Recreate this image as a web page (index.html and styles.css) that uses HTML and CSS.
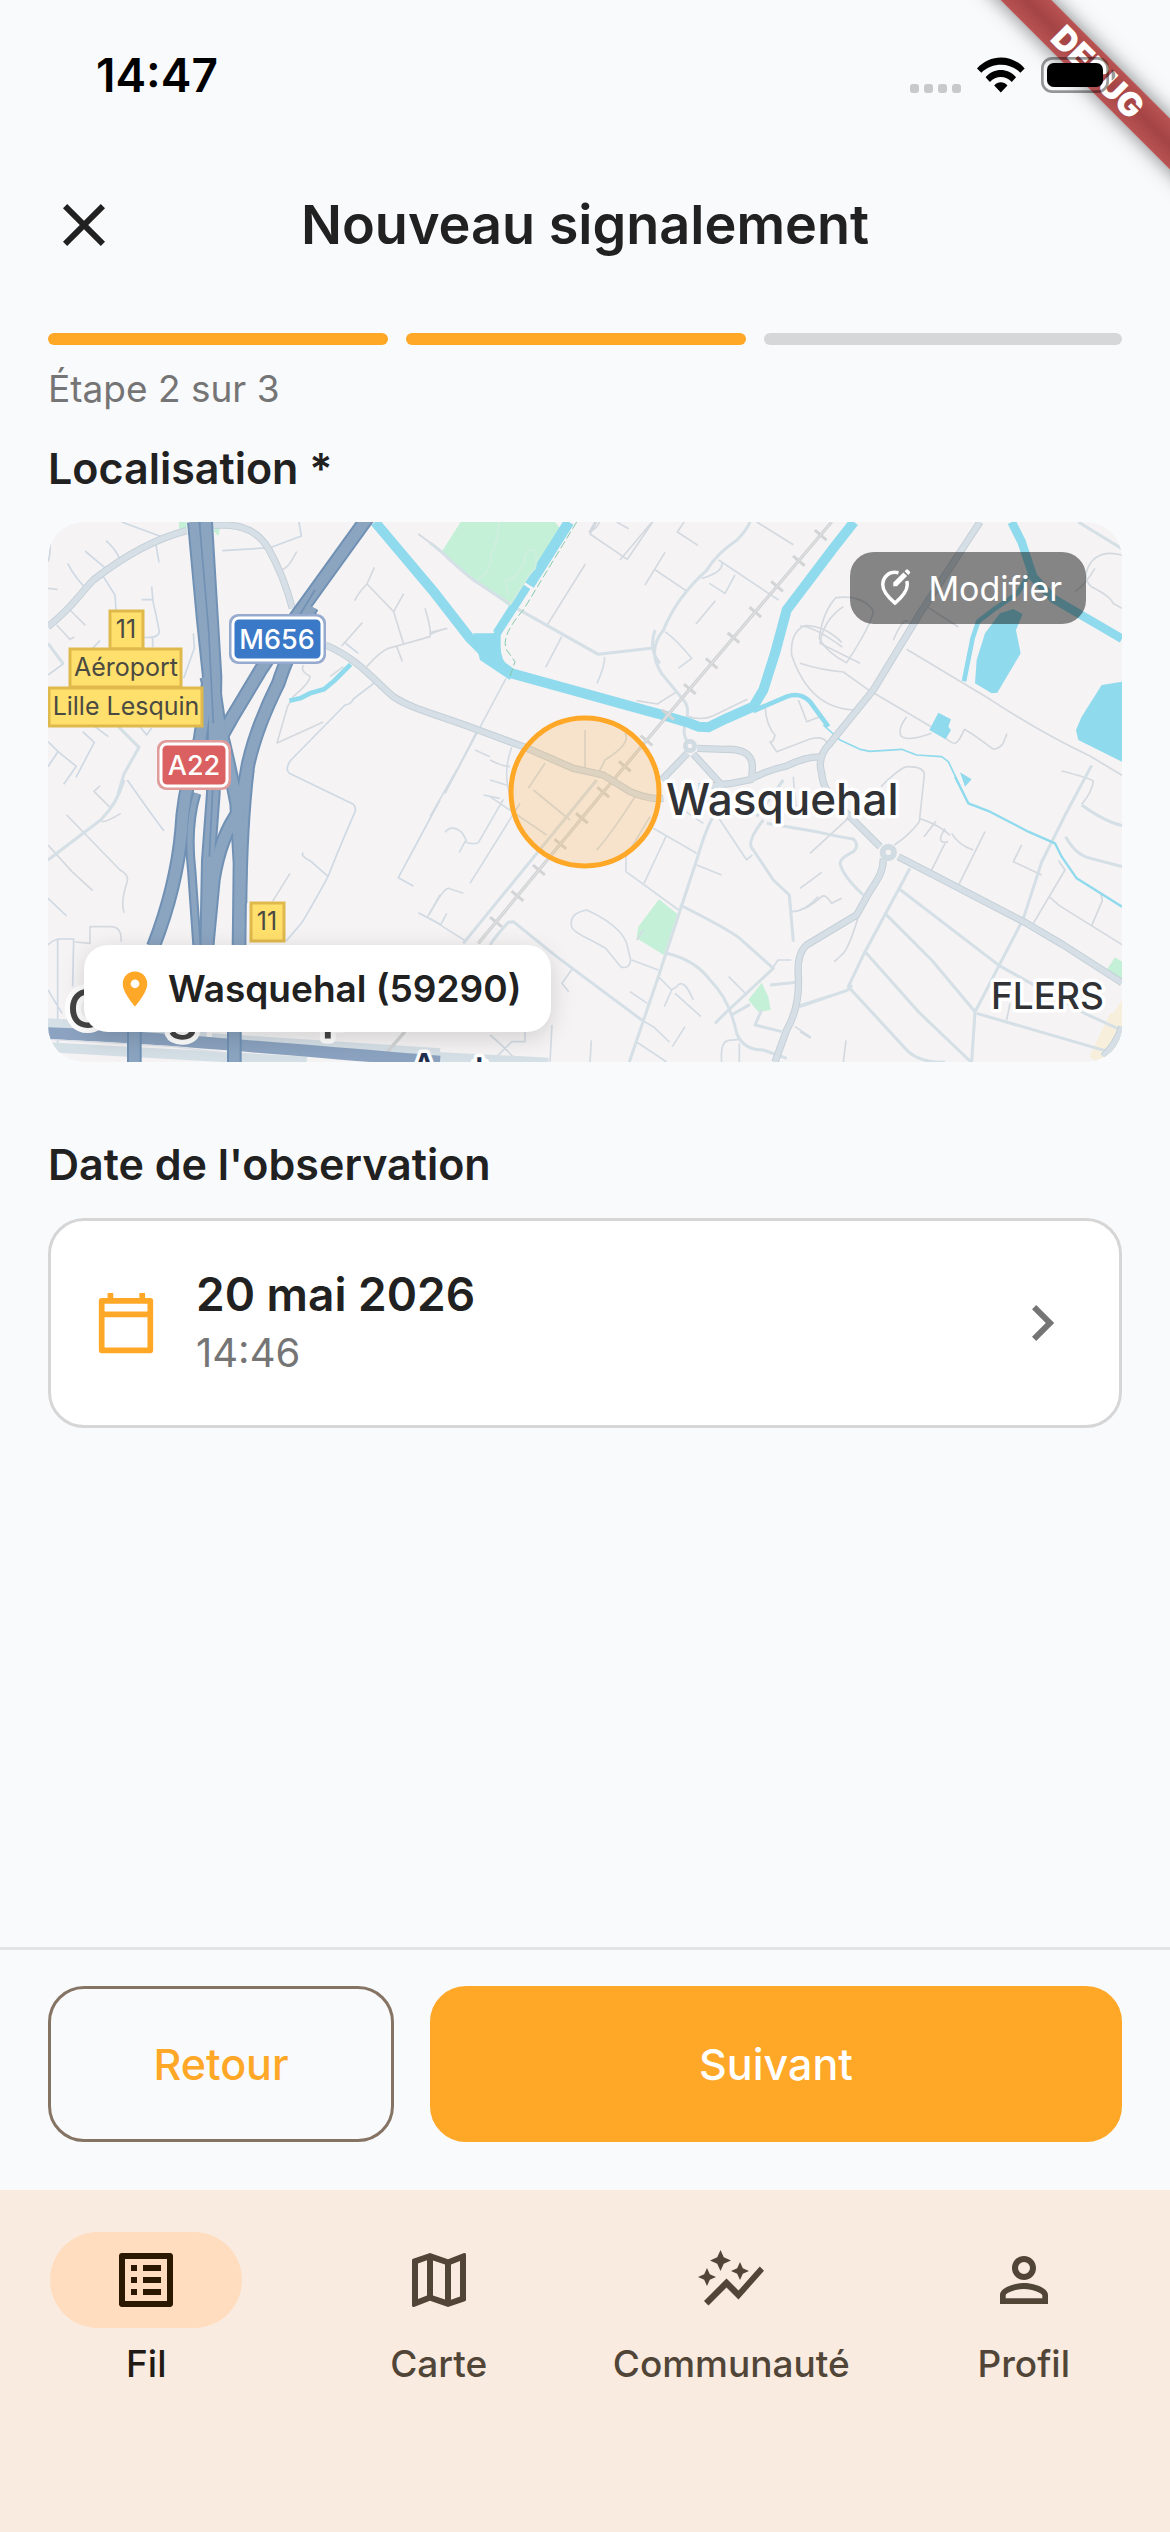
FILE: index.html
```html
<!DOCTYPE html>
<html lang="fr">
<head>
<meta charset="utf-8">
<meta name="viewport" content="width=device-width, initial-scale=1">
<title>Nouveau signalement</title>
<link rel="stylesheet" href="styles.css">
</head>
<body>
<div class="app">
  <div class="debug-banner" aria-hidden="true">DEBUG</div>

  <div class="status">
    <span class="status-time">14:47</span>
    <div class="status-icons">
      <div class="signal"><i></i><i></i><i></i><i></i></div>
      <svg width="48" height="36" viewBox="585 165 145 108" aria-hidden="true"><path d="M585 199C625 155 690 155 729 199L716 212C683 180 632 180 598 212ZM611 226C636 197 678 197 703 226L690 240C672 220 642 220 624 240ZM637 251C648 238 666 238 677 251L657 272Z"/></svg>
      <svg width="75" height="36" viewBox="780 168 225 108" aria-hidden="true"><rect x="784" y="172" width="196" height="100" rx="30" fill="none" stroke="#000" stroke-opacity=".4" stroke-width="8"/><path d="M992 205Q1003 211 1003 222T992 239Z" fill-opacity=".4"/><rect x="798" y="186" width="168" height="72" rx="20"/></svg>
    </div>
  </div>

  <header class="topbar">
    <button class="close" type="button" aria-label="Fermer"><svg class="icon" viewBox="0 0 24 24"><path d="M19 6.4 17.6 5 12 10.6 6.4 5 5 6.4l5.6 5.6L5 17.6 6.4 19l5.6-5.6 5.6 5.6 1.4-1.4-5.6-5.6z"/></svg></button>
    <h1>Nouveau signalement</h1>
  </header>

  <main>
    <div class="steps"><span class="done"></span><span class="done"></span><span></span></div>
    <p class="step-label">Étape 2 sur 3</p>

    <h2>Localisation *</h2>
    <div class="map">
      <svg class="map-canvas" viewBox="0 0 1074 540" preserveAspectRatio="xMidYMid slice" role="img" aria-label="Carte de Wasquehal">
        <g transform="scale(.33333) translate(-24 -36)" fill="none" stroke-linejoin="round">
          <!-- parks -->
          <g fill="#c3f0d7">
            <path d="M1262 36H1545L1560 55 1410 290 1300 210 1205 125ZM417 36h23v20h-23zM518 60l22-6-5 24z"/>
            <path d="M1857 1168l55 44-40 123-82-50 5-35ZM2165 1418l20 42 7 40-37 5-30-35ZM3225 1342l21 13v60l-46-35z"/>
          </g>
          <path d="M3246 1470l-26 40h-10l-62 130 22 16h76z" fill="#f7efdc"/>

          <!-- small streets -->
          <g stroke="#cfd9e4" stroke-width="5">
            <path d="M245 36 365 80M198 92Q225 115 240 148M135 123l62 52M83 160q20 40 52 72M190 200l35 55 3 45M348 105l9 52M335 230l4 45q10 40 19 90-2 20-45 17M305 269h32M547 122 690 113 784 78 777 36M338 380v32M24 495l45-33-45-62M460 370l3 45-32 90M180 392 155 418M30 100q2 35-6 55M128 665l35 32-55 105M24 695l33 32 52 42-38 54M165 650l40 30M24 770l30-45M300 650l20 25 15-22M748 790q-15-15 5-40L915 585q18-2 25-18L1005 517M748 790 940 883q10 8 4 25-40 90-80 192-60 110-80 140l-46 54M790 1028q-10 10 20 24l55 48M1200 870 1075 1103l45 25M1135 1208l65 35M24 1165l56 53M262 810q70 100 110 153M24 1440l42 70M53 1655V1287h48l-3 142M24 1305q15-15 30-18M912 396l43 34"/>
          </g>
          <g stroke="#d4d9df" stroke-width="5">
            <path d="M770 125q-30 60-50 53M1135 72 1200 120M1003 172l-22 50 80 83 30-54M981 222q-25 25-37 50M1061 305l30 98M980 470q40-45 65-55l125-35q5-20-15-85M1070 410l17 44M967 338l-62 70M1170 373l30-12M24 235l29 3M90 300l46 46M50 345l40 43 13-7M790 465q-10 20 20 34 0 20-50 60l-17 30-32 110L850 636M870 500l40-30M80 915l160 165q30 15 20 40-18 55-8 88M24 1005l72 80 62 57M180 828l-18 16 46 46M750 1090l-52 84M1200 1155l-37 65M105 1296l45 4v-50h60q38 0 33 45M185 935q18 0 57-25"/>
            <path d="M1665 36l-17 30q25-12 30-30M1838 36 1762 148 1650 72l20-36M1740 150l96-114M1730 36l36 20M1932 36l-20 30 62 40M2150 36l110 68M1875 127l-60 98M1846 180l92 62M1636 162l-115 184M2026 272l-58 70M1170 368l52-13M1350 750q40 20 60 20"/>
            <path d="M2450 600q-140 0-195-165-5-70 40-88 60 0 110 50M2410 290q-60 40-70 110l120 60M1790 572l62 10 60-38M1938 618q45 15 80 0l104-50M2175 590q5 60 30 85-5 25-15 20l20 30 100-38q40-10 50 10M2275 570q20 50 25 65l40-15"/>
            <path d="M2338 385q10-80 50-122 80-10 112 40-5 40-80 155-60-30-82-73ZM2280 348q40 0 127 63M2280 460q60 20 130 26l70 50L2690 660q40 40 55 40 12-4 28-42 20 10 84 58 15 5 32-15l12-30M2600 418l250 150q160 105 300 170l96 58M2665 293l90 58M2600 620q-30 40-15 60 20 15 90-10M2560 390q30-70 45-55M3246 135q-80-20-105 45-10 30 13 50 60 30 65 50l27 15M3105 245q30-20 60-70"/>
            <path d="M3065 783q80 20 95 30-2 30-35 70M2523 830q60-60 80-60 50 0 50 25l-15 140q-30 40-75 70M2640 926q60 20 90 50M2652 980l36-46M2715 955q-30 50 9 40M2735 970q20 35 65 50M2715 1000l-40 80M2835 965l-78 158M2945 1005q-25 50-25 50l85 40M2280 1135l65-48M2310 1030l120-110M2980 1240l95-160q-20-30-20-28M3030 1162l28 25 188 117M3155 1247l32-75-4-20M2455 1220q-30 100-50 115l-22 20M2910 1480l-10 50M2410 1656l8-65M2280 1565l32 20M2280 1200q25-5 65-40 10-10 30 20l30-15"/>
          </g>
          <g stroke="#d3dbe3" stroke-width="5">
            <path d="M2036 150l180 120M2008 220l47 30 30-55M2045 155q10 30-60 50M1875 365q35 25 80 80l-40 30M1565 380l-48 92M1694 440q0 30-23 80M1398 505 1215 850M1310 665l-90 175M1415 712q-30 80 0 160M1350 810l65 20M1290 1120 1440 880M1170 920l80-140M1350 740l-45-20M1330 855l50 10M1215 967q20-25 50 0 20 30 10 28 20 10 40 3l75-130M1275 995l-17 32M1170 1210q40-75 55-75l45 15M1170 1225l105 67M1220 1210l-18 35M1480 840l110 90M1515 760l-50 75M1635 660v115M1755 670q20 30-60 80l-20 40M1350 860l170 115M1785 860q-70 110-115 160M1810 1260l-20 30M1595 1250q-10-40 45-50 100 45 120 100l12 50q-5 30-30 20l-45-55-35-20q-65-30-67-45ZM1775 1350l80 30M1855 1400l40 40 15-10q20-30 50 40M1895 1440l-22 50M1905 1450l78 70M1770 1445l52 35M1805 1530l35 20 48 46M1935 1550l-38 60M1790 1596l90 60M1530 1655l6-110M1650 1656l4-65M1350 1575q60 50 80 80M1455 1560v35h-40l-50 50M1598 1375l-32 45 20 25M2000 870l120 180 17-15M1900 880l90 60M1840 955l130 75M1880 975l-68 145M1830 920l-72 120v45l158 115M1970 1065l75 30M2265 850l5 75M2330 850l3 65M2066 1400l55 55M2254 1350h-40l-20 30M2255 1205q40 0 80-45M2265 1550l48 32M2045 1656q-5-60 20-65l35-3M2098 1600v56M2260 800l4 60"/>
          </g>

          <!-- local roads -->
          <g stroke="#d5dfe6" stroke-width="9">
            <path d="M24 400 70 462M235 650l62 62-45 80-18 60M252 810q-20 70-70 120L24 1050M1170 98l35 28q40 40 95 84l130 85 245 138 170-20M2130 36q-10 25-40 55-60 40-90 90-90 80-130 180-50 60-5 130l70 85q15 20 0 70-10 30 15 60M1845 360q-20 60 15 100M1670 810 1270 1300M1350 1305q20-30 55-68l15-2 130 105 255 190M2020 920q-20 30-50 130L1855 1400 1768 1656M1920 1185q170 85 190 110l90 80-145 135-30 30M1880 1330q85 20 130 80 60 60 80 160 20 50 80 50l70 25M2150 920l80-110M2170 930q-55 70-30 90l60 90 48 45 12 140M2165 1500l-20 45 80 20M2190 1425l80-8M2075 1515l55-32M2180 940l150 25q60 15 110 22 20 20 0 38-40 20-40 35 10 40 70 95M2280 1490l130-45q20-5 25-20M2610 1075 2475 1325l-50 105 180 195q40 35 110 31M2578 1137l300 230 260 145 105 48M2535 1210l140 140 130 155M2478 1328l160 180 155 148M2810 1510 3205 1625M2795 1656l10-150 145-280 55-170 70-140 80-150M3077 980q30 55 75 65l94 25M3125 885q70 50 121 62M3115 36l131 80M2270 1490l110-35"/>
          </g>
          <path d="M24 1540 500 1568M515 1585l685 45M24 1612 800 1655M1170 1640l355 18" stroke="#d5dfe6" stroke-width="30"/>

          <!-- canals and ponds -->
          <g stroke="#8fdaed" stroke-width="30">
            <path d="M1005 36 1185 250 1290 385 1345 440 1415 490 1850 610 1950 640 1975 650 2005 652 2060 625 2140 590 2170 540 2205 430 2240 300 2380 115 2442 36"/>
            <path d="M1587 36 1468 225" stroke-width="32"/><path d="M1460 230 1370 370M2915 36l30 60 35 105 60 65 206 120" stroke-width="26"/>
            <path d="M2140 603 2240 560Q2280 545 2310 575L2365 650M2965 195l-32 55-68 46-50 38-17 50-26 130M748 572l32-7 30-15 42-12 30-25 50-50" stroke-width="14"/>
            <path d="M2350 645 2400 690 2460 718 2490 724 2585 718 2630 735 2705 740 2725 755 2785 880" stroke-width="5"/>
            <path d="M2745 800 2765 840 2785 880 2850 905 2965 965 3045 1000 3065 1040 3110 1105 3246 1190" stroke-width="7"/>
          </g>
          <path d="M1300 370h60l22-20 0 60q0 50 38 70l-10 30-90-60ZM2805 520l5-70 25-80 45-60 40-13 28 15-20 48 14 70-70 118-17 2ZM3246 515l-61 10-60 95-17 40 7 30 131 65ZM2695 608l38 20-8 22 8 10-16 28-49-28ZM2760 787l35 21-20 22z" fill="#8fdaed"/>
          <path d="M1610 36 1450 300Q1380 380 1400 420L1425 455 1410 500" stroke="#86c9ab" stroke-width="3" stroke-dasharray="24 10"/>
          <path d="M1378 36q-5 60-25 100 0 50-40 75M1410 285q60-100 75-110 15-60-20-55-15 20-12 40l-30 45q-40-5-15 50" stroke="#cfeedd" stroke-width="6"/>

          <!-- railway -->
          <path d="M2375 36 1930 560 1720 810 1315 1300M1095 1565 1015 1656" stroke="#d2d4d6" stroke-width="10"/>
          <path d="M2345 72 1930 560 1720 810 1315 1300" stroke="#d2d4d6" stroke-width="46" stroke-dasharray="9 92"/>
          <path d="M2375 36 1930 560 1720 810 1315 1300" stroke="#e4e4e5" stroke-width="3"/>

          <!-- main roads: casing, then surface -->
          <g stroke="#c5d0d8" stroke-width="22">
            <path id="avenue" d="M24 350C100 290 120 250 160 210 250 140 350 85 440 62M520 46C620 38 660 75 685 115 710 160 740 230 757 295M857 405C960 450 1000 510 1060 560 1120 600 1200 615 1320 662L1450 710 1600 775 1690 795 1770 845Q1830 870 1870 865M1865 810 1942 730M1972 715l80 3q90-5 85 60l-2 30-60 12-100 10M1960 732l80 88M2130 808q60-30 110-40 60-30 110-27"/>
            <path id="boulevard" d="M2820 36 2640 310 2500 540 2370 700Q2330 740 2345 790C2350 850 2390 880 2430 920L2520 1010M2575 1040 2700 1105 2960 1240 3070 1305 3246 1418M2530 1045C2530 1100 2500 1120 2475 1170L2450 1215 2300 1305Q2270 1330 2275 1400 2280 1490 2240 1560L2205 1656M3246 1550Q3230 1600 3190 1640"/>
          </g>
          <g stroke="#d6dfe6" stroke-width="16"><use href="#avenue"/><use href="#boulevard"/></g>
          <circle cx="1950" cy="708" r="14" fill="#f5f3f4" stroke="#d1dbe2" stroke-width="14"/>
          <circle cx="2545" cy="1027" r="17" fill="#f5f3f4" stroke="#d1dbe2" stroke-width="18"/>

          <!-- motorways -->
          <path d="M24 1570C300 1578 700 1615 1200 1655" stroke="#8ba3c0" stroke-width="36"/>
          <path d="M24 1588 400 1610 600 1635" stroke="#dde2e8" stroke-width="4"/>
          <g stroke="#7091b4" stroke-width="44">
            <path id="link" d="M985 20 830 235 765 325 665 475 575 625 530 705M815 290Q740 440 715 520 650 650 625 760L600 900Q540 980 520 1110L500 1320"/>
            <path id="mway" d="M463 36 490 330 508 500 480 690Q430 840 425 960 410 1130 340 1310M497 36 525 500 520 850 505 1050 500 1320M500 500Q560 720 590 880L600 1060 597 1320 583 1500V1656M283 1550V1656"/>
          </g>
          <g stroke="#7091b4" stroke-width="28"><path id="lane" d="M630 780Q610 950 608 1180M470 850Q440 950 455 1080L472 1320M510 400 545 640"/></g>
          <g stroke="#8ba4c0" stroke-width="32"><use href="#link"/><use href="#mway"/></g>
          <g stroke="#8ba4c0" stroke-width="16"><use href="#lane"/></g>
          <path d="M478 36 506 360 520 640M825 240 770 330M518 840 508 1040" stroke="#7091b4" stroke-width="5"/>
        </g>

        <!-- road shields -->
        <g stroke="#e0b94c" stroke-width="3" fill="#ffe06c">
          <rect x="62" y="89" width="33" height="38"/><rect x="22" y="127" width="111" height="38"/><rect x="1" y="166" width="153" height="38"/><rect x="203" y="381" width="33" height="38"/>
        </g>
        <g class="shield">
          <text x="78" y="116">11</text><text x="78" y="154">Aéroport</text><text x="78" y="193">Lille Lesquin</text><text x="219" y="408">11</text>
        </g>
        <rect x="181" y="92" width="97" height="50" rx="9" fill="#96aacf"/><rect x="185" y="96" width="89" height="42" rx="6" fill="#3a78c8" stroke="#fff" stroke-width="3"/>
        <rect x="109" y="218" width="74" height="50" rx="9" fill="#e09b9b"/><rect x="113" y="222" width="66" height="42" rx="6" fill="#db6061" stroke="#fff" stroke-width="3"/>
        <g class="shield shield-light"><text x="229" y="127">M656</text><text x="146" y="253">A22</text></g>

        <!-- place names -->
        <text class="place place-city" x="618" y="293">Wasquehal</text>
        <text class="place" x="943" y="487">FLERS</text>
        <g class="place place-big"><text x="19" y="506">C</text><text x="118" y="506">g</text><text x="273" y="506">p</text></g>
        <g class="place place-poi"><text x="363" y="558">A</text><text x="426" y="560">t</text></g>

        <circle cx="537" cy="270" r="74" fill="#ffa726" fill-opacity=".2" stroke="#ffa726" stroke-width="5"/>
      </svg>
      <button class="edit" type="button">
        <svg width="42" height="42" viewBox="0 0 24 24" aria-hidden="true"><path d="M14 3.3C8.500 2 5 5.800 5 10.200c0 3 2.300 6.500 7 10.400 4.700-3.900 7-7.400 7-10.400 0-.8-.1-1.500-.3-2.200" fill="none" stroke="#fff" stroke-width="2"/><path fill="#fff" d="M11 11V8.900L16.800 3.100 18.900 5.200 13.100 11zM17.500 2.400l.9-.9c.3-.3.7-.3 1 0l1.100 1.100c.3.3.3.7 0 1l-.9.9z"/></svg>
        Modifier
      </button>
      <div class="place-chip">
        <svg width="42" height="42" viewBox="0 0 24 24" aria-hidden="true"><path fill="#ffa726" d="M12 2C8.100 2 5 5.100 5 9c0 5.300 7 13 7 13s7-7.700 7-13c0-3.900-3.100-7-7-7zm0 9.500a2.500 2.500 0 0 1 0-5 2.500 2.500 0 0 1 0 5z"/></svg>
        Wasquehal (59290)
      </div>
    </div>

    <h2 class="date-heading">Date de l'observation</h2>
    <button class="date-card" type="button">
      <svg class="icon" viewBox="0 0 24 24" aria-hidden="true"><path d="M3.900 4.600h16.200v16.500H3.900zM4 9.100h16M6.800 4.600V2M17.400 4.600V2" fill="none" stroke="#ffa726" stroke-width="1.900" stroke-linejoin="round"/></svg>
      <span class="date-text"><span class="date-day">20 mai 2026</span><span class="date-time">14:46</span></span>
      <svg class="icon" viewBox="0 0 24 24" aria-hidden="true"><path fill="#757575" d="M9.400 18 8 16.600l4.600-4.600L8 7.400 9.400 6l6 6z"/></svg>
    </button>
  </main>

  <div class="actions">
    <button class="btn" type="button">Retour</button>
    <button class="btn btn-primary" type="button">Suivant</button>
  </div>

  <nav class="tabs">
    <a href="#fil" class="active" aria-current="page"><span class="pill"><svg class="icon" viewBox="0 0 24 24"><path d="M19 5v14H5V5h14m1.100-2H3.900c-.5 0-.9.4-.9.9v16.200c0 .4.4.9.9.9h16.200c.4 0 .9-.5.9-.9V3.900c0-.5-.5-.9-.9-.9zM11 7h6v2h-6V7zm0 4h6v2h-6v-2zm0 4h6v2h-6zM7 7h2v2H7zm0 4h2v2H7zm0 4h2v2H7z"/></svg></span>Fil</a>
    <a href="#carte"><span class="pill"><svg class="icon" viewBox="0 0 24 24"><path d="M20.500 3l-.16.03L15 5.100 9 3 3.360 4.900c-.21.07-.36.25-.36.48V20.500c0 .28.22.5.5.5l.16-.03L9 18.900l6 2.100 5.640-1.900c.21-.07.36-.25.36-.48V3.500c0-.28-.22-.5-.5-.5zM10 5.470l4 1.400v11.660l-4-1.400V5.470zm-5 .99l3-1.010v11.700l-3 1.160V6.460zm14 11.080l-3 1.010V6.860l3-1.160v11.840z"/></svg></span>Carte</a>
    <a href="#communaute"><span class="pill"><svg class="icon" viewBox="0 0 24 24"><path d="M14.060 9.940L12 9l2.060-.94L15 6l.94 2.060L18 9l-2.060.94L15 12l-.94-2.060zM4 14l.94-2.060L7 11l-2.060-.94L4 8l-.94 2.060L1 11l2.060.94L4 14zm4.500-5l1.090-2.410L12 5.500 9.590 4.410 8.500 2 7.410 4.410 5 5.500l2.410 1.090L8.500 9zm-4 11.500l6-6.010 4 4L23 8.930l-1.410-1.410-7.090 7.970-4-4L3 19l1.500 1.500z"/></svg></span>Communauté</a>
    <a href="#profil"><span class="pill"><svg class="icon" viewBox="0 0 24 24"><path d="M12 6a2 2 0 1 1 0 4 2 2 0 0 1 0-4m0 9c2.970 0 6.100 1.460 6.100 2.100v1H5.900v-1C5.900 16.460 9.030 15 12 15m0-11C9.790 4 8 5.790 8 8s1.790 4 4 4 4-1.790 4-4-1.790-4-4-4zm0 9c-2.670 0-8 1.340-8 4v3h16v-3c0-2.660-5.330-4-8-4z"/></svg></span>Profil</a>
  </nav>
</div>
</body>
</html>
```
FILE: styles.css
```css
* {
  box-sizing: border-box;
}

body {
  margin: 0;
  background: #f9fafc;
  color: #212121;
  font-family: Inter, "Liberation Sans", sans-serif;
}

h1, h2, p {
  margin: 0;
}

button {
  margin: 0;
  padding: 0;
  border: 0;
  background: none;
  color: inherit;
  font: inherit;
}

svg {
  display: block;
  flex: none;
}

.icon {
  width: 72px;
  height: 72px;
  fill: currentColor;
}

.app {
  position: relative;
  display: flex;
  flex-direction: column;
  min-height: 100vh;
  overflow: hidden;
}

/* Corner ribbon, under the status icons */
.debug-banner {
  position: absolute;
  top: 54px;
  right: -78px;
  width: 300px;
  background: linear-gradient(#b85353, #a44444, #b85353);
  box-shadow: 0 0 20px rgba(0, 0, 0, .5);
  color: #fff;
  font-size: 33px;
  font-weight: 900;
  line-height: 36px;
  text-align: center;
  transform: rotate(45deg);
}

.status {
  position: relative;
  display: flex;
  align-items: center;
  justify-content: space-between;
  height: 141px;
  padding: 8px 54px 0 96px;
  color: #000;
}

.status-time {
  font-size: 46px;
  font-weight: 600;
}

.status-icons {
  display: flex;
  align-items: flex-end;
  gap: 16px;
}

.signal {
  display: flex;
  gap: 5px;
}

.signal i {
  width: 9px;
  height: 9px;
  border-radius: 3px;
  background: #c8c9cb;
}

.topbar {
  display: grid;
  grid-template-columns: 72px 1fr 72px;
  align-items: center;
  height: 168px;
  padding: 0 48px;
}

h1 {
  font-size: 54px;
  font-weight: 600;
  line-height: 72px;
  text-align: center;
  white-space: nowrap;
}

main {
  flex: 1;
  padding: 24px 48px;
}

.steps {
  display: grid;
  grid-template-columns: repeat(3, 1fr);
}

.steps span {
  height: 12px;
  border-radius: 6px;
  background: #d6d7d9;
}

.steps .done {
  margin-right: 18px;
  background: #ffa726;
}

.step-label {
  margin: 18px 0 24px;
  color: #757575;
  font-size: 37px;
  line-height: 51px;
}

h2 {
  margin-bottom: 24px;
  font-size: 43px;
  font-weight: 600;
  line-height: 60px;
}

.map {
  position: relative;
  height: 540px;
  overflow: hidden;
  border-radius: 36px;
  background: #f5f3f4;
}

.map-canvas {
  width: 100%;
  height: 100%;
}

.shield {
  fill: #4a4a42;
  font-size: 25px;
  text-anchor: middle;
}

.shield-light {
  fill: #fff;
  font-size: 27px;
  font-weight: 500;
}

.place {
  fill: #303236;
  stroke: #fff;
  stroke-width: 7px;
  stroke-linejoin: round;
  paint-order: stroke;
  font-size: 37px;
  font-weight: 500;
}

.place-city {
  font-size: 44px;
}

.place-big {
  fill: #444;
  stroke-width: 10px;
  font-size: 54px;
}

.place-poi {
  fill: #22304f;
}

.edit {
  position: absolute;
  top: 30px;
  right: 36px;
  display: flex;
  align-items: center;
  gap: 12px;
  height: 72px;
  padding: 0 24px;
  border-radius: 24px;
  background: rgba(0, 0, 0, .45);
  color: #fff;
  font-size: 34px;
}

.place-chip {
  position: absolute;
  bottom: 30px;
  left: 36px;
  display: flex;
  align-items: center;
  gap: 12px;
  height: 87px;
  padding: 0 30px;
  border-radius: 24px;
  background: #fff;
  box-shadow: 0 6px 24px rgba(0, 0, 0, .15);
  font-size: 37px;
  font-weight: 600;
}

.date-heading {
  margin-top: 72px;
}

.date-card {
  display: flex;
  align-items: center;
  gap: 34px;
  width: 100%;
  height: 210px;
  padding: 0 39px;
  border: 3px solid #d6d6d6;
  border-radius: 36px;
  background: #fff;
  text-align: left;
}

.date-text {
  display: flex;
  flex: 1;
  flex-direction: column;
}

.date-day {
  font-size: 46px;
  font-weight: 600;
  line-height: 60px;
}

.date-time {
  color: #757575;
  font-size: 40px;
  line-height: 58px;
}

.actions {
  display: grid;
  grid-template-columns: 1fr 2fr;
  gap: 36px;
  padding: 36px 48px 48px;
  border-top: 3px solid #e3e4e6;
}

.btn {
  height: 156px;
  border: 3px solid #857464;
  border-radius: 36px;
  color: #ffa726;
  font-size: 43px;
  font-weight: 500;
}

.btn-primary {
  border-color: #ffa726;
  background: #ffa726;
  color: #fff;
}

.tabs {
  display: grid;
  grid-template-columns: repeat(4, 1fr);
  padding: 42px 0 144px;
  background: #f9ebe0;
}

.tabs a {
  display: flex;
  flex-direction: column;
  align-items: center;
  gap: 12px;
  color: #514538;
  font-size: 37px;
  font-weight: 500;
  line-height: 48px;
  text-decoration: none;
}

.pill {
  display: flex;
  align-items: center;
  justify-content: center;
  width: 192px;
  height: 96px;
  border-radius: 48px;
}

.tabs .active {
  color: #211a14;
}

.active .pill {
  background: #ffddbe;
  color: #2a1800;
}
```
